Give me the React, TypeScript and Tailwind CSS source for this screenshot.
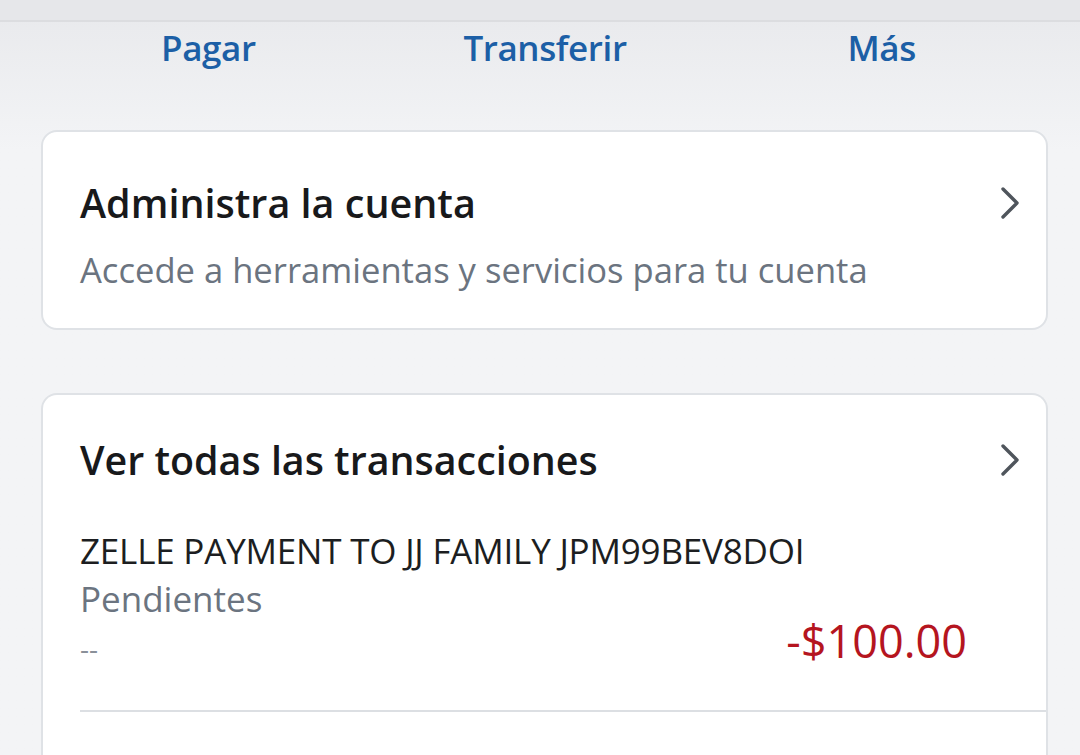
const TABS = ['Pagar', 'Transferir', 'Más']

function Chevron() {
  return (
    <svg width="22" height="34" viewBox="0 0 22 34" fill="none" className="shrink-0">
      <polyline points="4,3 18,17 4,31" stroke="#4f555c" strokeWidth="3.4" strokeLinecap="round" strokeLinejoin="round" />
    </svg>
  )
}

export default function App() {
  return (
    <div
      className="w-[1080px] h-[755px] overflow-hidden bg-gradient-to-b from-[#e8e9ec] to-[#f3f4f6] to-[20%]"
      style={{ fontFamily: '"Open Sans", "Noto Sans", sans-serif' }}
    >
      {/* Top strip */}
      <div className="h-[22px] bg-[#e6e7ea] border-b-2 border-[#dcdde0]" />

      {/* Action tabs */}
      <div className="flex h-[52px] items-center pl-[40px] pr-[30px]">
        {TABS.map(tab => (
          <div key={tab} className="flex-1 text-center text-[35px] font-semibold text-[#1c5fa6] tracking-[-0.4px]">
            {tab}
          </div>
        ))}
      </div>

      <div className="pl-[41px] pr-[32px] pt-[56px]">
        {/* Manage account card */}
        <div className="bg-white rounded-[16px] border-2 border-[#dfe2e6] pl-[37px] pr-[25px] pt-[46px] pb-[36px]">
          <div className="flex items-center justify-between h-[50px]">
            <h2 className="text-[39.5px] font-semibold text-[#18191b] leading-[50px]">
              Administra la cuenta
            </h2>
            <Chevron />
          </div>
          <p className="text-[34.6px] text-[#6b7480] mt-[20px] leading-[44px]">
            Accede a herramientas y servicios para tu cuenta
          </p>
        </div>

        {/* Transactions card */}
        <div className="mt-[63px] bg-white rounded-t-[16px] border-2 border-b-0 border-[#dfe2e6] h-[400px] pl-[37px] pt-[40px]">
          <div className="flex items-center justify-between h-[50px] pr-[25px]">
            <h2 className="text-[39.4px] font-semibold text-[#18191b] leading-[50px]">
              Ver todas las transacciones
            </h2>
            <Chevron />
          </div>

          <div className="mt-[42px] border-b-2 border-[#dcdfe3] pb-[37px]">
            <p className="text-[35px] text-[#1c1e21] leading-[48px] tracking-[-0.2px]">
              ZELLE PAYMENT TO JJ FAMILY JPM99BEV8DOI
            </p>
            <p className="text-[35px] text-[#6b7480] leading-[48px]">
              Pendientes
            </p>
            <div className="flex items-start justify-between pr-[79px] h-[50px]">
              <span className="text-[28px] text-[#8a9099] leading-[50px]">--</span>
              <span className="text-[45px] text-[#b5151f] leading-[50px] -mt-[7px]">-$100.00</span>
            </div>
          </div>
        </div>
      </div>
    </div>
  )
}
